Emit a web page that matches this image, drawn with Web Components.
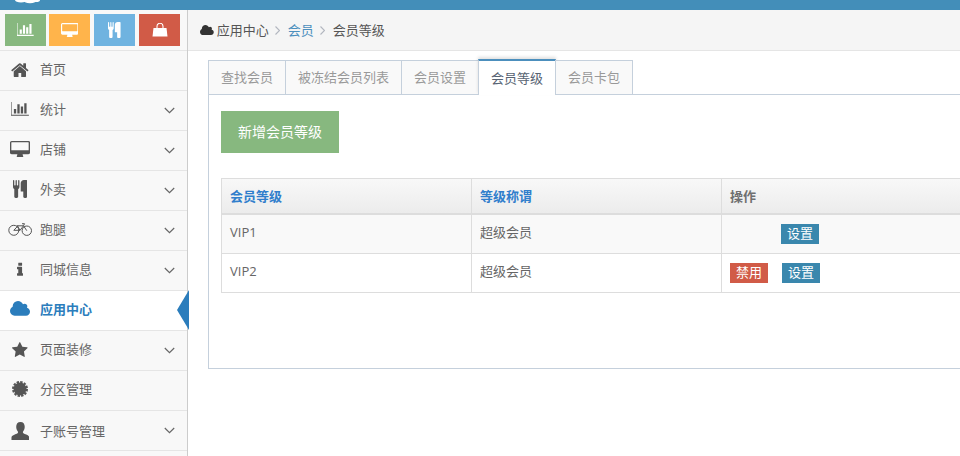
<!DOCTYPE html>
<html lang="zh">
<head>
<meta charset="utf-8">
<title>会员等级</title>
<style>
  html, body { margin: 0; height: 456px; overflow: hidden; background: #fff; }
  body { font: 13px/20px "Open Sans", "Noto Sans CJK SC", sans-serif; color: #666; }
</style>
</head>
<body>
<app-shell>
  <top-bar slot="top"></top-bar>
  <side-bar slot="side">
    <short-cuts></short-cuts>
    <menu-item icon="home" size="15">首页</menu-item>
    <menu-item icon="chart" size="15" arrow>统计</menu-item>
    <menu-item icon="desktop" size="16" arrow>店铺</menu-item>
    <menu-item icon="cutlery" size="18" arrow>外卖</menu-item>
    <menu-item icon="bicycle" size="13" arrow>跑腿</menu-item>
    <menu-item icon="info" size="14" arrow>同城信息</menu-item>
    <menu-item icon="cloud" size="16" active>应用中心</menu-item>
    <menu-item icon="star" size="15" arrow>页面装修</menu-item>
    <menu-item icon="cert" size="16">分区管理</menu-item>
    <menu-item icon="user" size="18" arrow low>子账号管理</menu-item>
  </side-bar>
  <bread-crumbs slot="crumbs">
    <span>应用中心</span>
    <a>会员</a>
    <span>会员等级</span>
  </bread-crumbs>
  <tab-box slot="main">
    <tab-item slot="tabs" w="78">查找会员</tab-item>
    <tab-item slot="tabs" w="117">被冻结会员列表</tab-item>
    <tab-item slot="tabs" w="78">会员设置</tab-item>
    <tab-item slot="tabs" w="78" active>会员等级</tab-item>
    <tab-item slot="tabs" w="78">会员卡包</tab-item>
    <add-button>新增会员等级</add-button>
    <level-table>
      <level-row head>
        <span>会员等级</span>
        <span>等级称谓</span>
        <span>操作</span>
      </level-row>
      <level-row odd>
        <span>VIP1</span>
        <span>超级会员</span>
        <span><mini-btn color="#3a87ad" style="margin-left:51px">设置</mini-btn></span>
      </level-row>
      <level-row last>
        <span>VIP2</span>
        <span>超级会员</span>
        <span><mini-btn color="#d15b47">禁用</mini-btn><mini-btn color="#3a87ad" style="margin-left:14px">设置</mini-btn></span>
      </level-row>
    </level-table>
  </tab-box>
</app-shell>

<script>
// icon paths, [viewBox width, viewBox height, d]
const ICONS = {
  home: [1664, 1408, 'M1408 864v480q0 26-19 45t-45 19h-384v-384h-256v384h-384q-26 0-45-19t-19-45v-480q0-1 .5-3t.5-3l575-474 575 474q1 2 1 6zm223-69l-62 74q-8 9-21 11h-3q-13 0-21-7l-692-577-692 577q-12 8-24 7-13-2-21-11l-62-74q-8-10-7-23.500t11-21.500l719-599q32-26 76-26t76 26l244 204v-195q0-14 9-23t23-9h192q14 0 23 9t9 23v408l219 182q10 8 11 21.500t-7 23.500z'],
  chart: [2048, 1664, 'M576 768v512h-256v-512h256zm384-512v1024h-256v-1024h256zm1024 1152v128h-2048v-1536h128v1408h1920zm-640-896v768h-256v-768h256zm384-384v1152h-256v-1152h256z'],
  desktop: [1920, 1536, 'M1792 864v-704q0-13-9.500-22.500t-22.500-9.500h-1600q-13 0-22.500 9.500t-9.500 22.500v704q0 13 9.500 22.500t22.500 9.500h1600q13 0 22.500-9.500t9.500-22.500zm128-704v960q0 66-47 113t-113 47h-544q0 37 16 77.500t32 71 16 43.500q0 26-19 45t-45 19h-512q-26 0-45-19t-19-45q0-14 16-44t32-70 16-78h-544q-66 0-113-47t-47-113v-960q0-66 47-113t113-47h1632q66 0 113 47t47 113z'],
  cutlery: [1408, 1792, 'M640 64v640q0 61-35.500 111t-92.500 70v779q0 52-38 90t-90 38h-128q-52 0-90-38t-38-90v-779q-57-20-92.500-70t-35.500-111v-640q0-26 19-45t45-19 45 19 19 45v416q0 26 19 45t45 19 45-19 19-45v-416q0-26 19-45t45-19 45 19 19 45v416q0 26 19 45t45 19 45-19 19-45v-416q0-26 19-45t45-19 45 19 19 45zm768 0v1600q0 52-38 90t-90 38h-128q-52 0-90-38t-38-90v-512h-224q-13 0-22.500-9.500t-9.500-22.500v-800q0-132 94-226t226-94h256q26 0 45 19t19 45z'],
  info: [640, 1408, 'M640 1184v128q0 26-19 45t-45 19h-512q-26 0-45-19t-19-45v-128q0-26 19-45t45-19h64v-384h-64q-26 0-45-19t-19-45v-128q0-26 19-45t45-19h384q26 0 45 19t19 45v576h64q26 0 45 19t19 45zm-128-1056v192q0 26-19 45t-45 19h-256q-26 0-45-19t-19-45v-192q0-26 19-45t45-19h256q26 0 45 19t19 45z'],
  cloud: [1920, 1536, 'M1920 1024q0 159-112.500 271.500t-271.500 112.500h-1088q-185 0-316.500-131.500t-131.500-316.500q0-132 71-241.500t187-163.500q-2-28-2-43 0-212 150-362t362-150q158 0 286.500 88t187.500 230q70-62 166-62 106 0 181 75t75 181q0 75-41 138 129 30 213 134.500t84 239.500z'],
  star: [1664, 1600, 'M1664 615q0 22-26 48l-363 354 86 500q1 7 1 20 0 21-10.500 35.500t-30.500 14.500q-19 0-40-12l-449-236-449 236q-22 12-40 12-21 0-31.500-14.500t-10.500-35.500q0-6 2-20l86-500-364-354q-25-27-25-48 0-37 56-46l502-73 225-455q19-41 49-41t49 41l225 455 502 73q56 9 56 46z'],
  user: [20, 19, 'M10 0c3 0 4.500 2.200 4.500 5 0 2-.8 3.800-1.700 5-.4.600-.3 1.500.3 2 1.800 1.200 6.400 2 6.400 4.500V19H.5v-2.500C.5 14 5.100 13.200 6.900 12c.6-.5.7-1.400.3-2-.9-1.200-1.700-3-1.700-5C5.500 2.200 7 0 10 0z']
};

function iconSvg(name, size) {
  if (name === 'bicycle') {
    return `<svg viewBox="0 0 24 13" height="${size}" width="${size * 24 / 13}" fill="none" stroke="currentColor" stroke-width="1">
      <circle cx="5.800" cy="7.300" r="5"/><circle cx="18.800" cy="7.700" r="4.700"/>
      <path d="M5.800 7.300L10 2.800H15.500L18.800 7.700M9 2L12 7.300H5.800M15.500 2.800L12 7.300M14 .7h2.500L15.500 2.800"/>
    </svg>`;
  }
  if (name === 'cert') {
    return `<svg viewBox="0 0 16 16" height="${size}" width="${size}" fill="currentColor" stroke="currentColor">
      <circle cx="8" cy="8" r="6.500" stroke="none"/>
      <circle cx="8" cy="8" r="7" fill="none" stroke-width="2" stroke-dasharray="2.400 1.265"/>
    </svg>`;
  }
  if (name === 'bag') {
    return `<svg viewBox="0 0 16 14" height="${size}" width="${size * 16 / 14}" fill="currentColor">
      <path d="M1.500 5h13l1 8.500H.5z"/>
      <path d="M5 6V3.300a3 3 0 0 1 6 0V6" fill="none" stroke="currentColor" stroke-width="1.100"/>
    </svg>`;
  }
  const [w, h, d] = ICONS[name];
  return `<svg viewBox="0 0 ${w} ${h}" height="${size}" width="${size * w / h}" fill="currentColor"><path d="${d}"/></svg>`;
}

const shellTemplate = document.createElement('template');
shellTemplate.innerHTML = `
<style>
  :host { display: grid; grid-template-columns: 188px 1fr; grid-template-rows: 10px 41px 1fr; height: 456px; }
  ::slotted([slot=top]) { grid-column: 1 / 3; }
  .side { grid-row: 2 / 4; display: block; }
</style>
<slot name="top"></slot>
<div class="side"><slot name="side"></slot></div>
<slot name="crumbs"></slot>
<slot name="main"></slot>`;

class AppShell extends HTMLElement {
  constructor() {
    super();
    this.attachShadow({ mode: 'open' });
    this.shadowRoot.appendChild(shellTemplate.content.cloneNode(true));
  }
}

class TopBar extends HTMLElement {
  constructor() {
    super();
    this.attachShadow({ mode: 'open' }).innerHTML = `
    <style>
      :host { display: block; height: 10px; background: #438eb9; overflow: hidden; }
      svg { display: block; margin-left: 15px; }
    </style>
    <svg width="25" height="4" viewBox="0 0 25 4" fill="#fff"><ellipse cx="6" cy="0" rx="6" ry="2.500"/><ellipse cx="15" cy="0" rx="7" ry="3.300"/><ellipse cx="21" cy="0" rx="4" ry="2"/></svg>`;
  }
}

class SideBar extends HTMLElement {
  constructor() {
    super();
    this.attachShadow({ mode: 'open' }).innerHTML = `
    <style>
      :host { display: block; height: 446px; background: #f8f8f8; border-right: 1px solid #ccc; box-sizing: border-box; width: 188px; position: relative; }
    </style>
    <slot></slot>`;
  }
}

class ShortCuts extends HTMLElement {
  constructor() {
    super();
    const items = [['chart', '#87b87f', 14], ['desktop', '#ffb44b', 14], ['cutlery', '#6fb3e0', 16], ['bag', '#d15b47', 14]];
    this.attachShadow({ mode: 'open' }).innerHTML = `
    <style>
      :host { display: flex; height: 41px; padding: 4px 0 0 5px; box-sizing: border-box; border-bottom: 1px solid #e5e5e5; }
      div { width: 41px; height: 32px; margin-right: 4px; display: flex; align-items: center; justify-content: center; color: #fff; }
      div:nth-child(2) { margin-right: 3px; }
    </style>
    ${items.map(([name, bg, size]) => `<div style="background:${bg}">${iconSvg(name, size)}</div>`).join('')}`;
  }
}

class MenuItem extends HTMLElement {
  constructor() {
    super();
    this.attachShadow({ mode: 'open' });
  }
  connectedCallback() {
    if (this.rendered) return;
    this.rendered = true;
    const active = this.hasAttribute('active');
    const arrow = this.hasAttribute('arrow');
    const low = this.hasAttribute('low');
    this.shadowRoot.innerHTML = `
    <style>
      :host { display: flex; align-items: center; height: 40px; box-sizing: border-box; padding-bottom: 3px; border-bottom: 1px solid #e5e5e5; position: relative; background: ${active ? '#fff' : '#f8f8f8'}; color: ${active ? '#2b7dbc' : '#666'}; font-weight: ${active ? 700 : 400}; }
      .ic { width: 40px; display: flex; justify-content: center; color: ${active ? '#2b7dbc' : '#555'}; ${low ? 'padding-top: 4px;' : ''} }
      .tx { flex: 1; ${low ? 'padding-top: 3px;' : ''} }
      .chev { margin: 2px 12px 0 0; width: 11px; height: 7px; color: #666; }
      .tip { position: absolute; right: -2px; top: -1px; width: 12px; height: 40px; background: #2b7dbc; clip-path: polygon(100% 0, 100% 100%, 0 50%); }
    </style>
    <span class="ic">${iconSvg(this.getAttribute('icon'), +this.getAttribute('size'))}</span>
    <span class="tx"><slot></slot></span>
    ${arrow ? '<svg class="chev" viewBox="0 0 11 7" fill="none" stroke="currentColor" stroke-width="1.200"><path d="M.8 1l4.700 4.700L10.200 1"/></svg>' : ''}
    ${active ? '<i class="tip"></i>' : ''}`;
  }
}

class BreadCrumbs extends HTMLElement {
  constructor() {
    super();
    this.attachShadow({ mode: 'open' }).innerHTML = `
    <style>
      :host { display: flex; align-items: center; height: 41px; box-sizing: border-box; background: #f5f5f5; border-bottom: 1px solid #e5e5e5; padding-left: 12px; color: #555; }
      svg.cloud { margin-right: 3px; color: #333; }
      ::slotted(a) { color: #4c8fbd; }
      ::slotted(*:not(:first-child)) { margin-left: 19px; }
      ::slotted(*) { display: block; }
      .sep { position: absolute; top: 26px; width: 5px; height: 9px; color: #b2b6bf; }
    </style>
    ${iconSvg('cloud', 11).replace('<svg', '<svg class="cloud"')}
    <slot></slot>
    <svg class="sep" style="left:275px" viewBox="0 0 5 9" fill="none" stroke="currentColor" stroke-width="1.100"><path d="M.5 .5l4 4-4 4"/></svg>
    <svg class="sep" style="left:320px" viewBox="0 0 5 9" fill="none" stroke="currentColor" stroke-width="1.100"><path d="M.5 .5l4 4-4 4"/></svg>`;
  }
}

class TabBox extends HTMLElement {
  constructor() {
    super();
    this.attachShadow({ mode: 'open' }).innerHTML = `
    <style>
      :host { display: block; padding: 9px 0 0 20px; width: 800px; box-sizing: border-box; }
      .tabs { display: flex; height: 34px; position: relative; z-index: 1; }
      .panel { border: 1px solid #c5d0dc; height: 275px; box-sizing: border-box; padding: 16px 12px; }
    </style>
    <div class="tabs"><slot name="tabs"></slot></div>
    <div class="panel"><slot></slot></div>`;
  }
}

class TabItem extends HTMLElement {
  constructor() {
    super();
    this.attachShadow({ mode: 'open' });
  }
  connectedCallback() {
    const active = this.hasAttribute('active');
    this.shadowRoot.innerHTML = `
    <style>
      :host { display: block; box-sizing: border-box; width: ${this.getAttribute('w')}px; text-align: center;
        height: ${active ? 36 : 35}px; margin-top: ${active ? -1 : 0}px; margin-left: -1px; flex: none;
        border: 1px solid #c5d0dc; ${active ? 'border-top: 2px solid #4c8fbd; border-bottom: 0; background: #fff; color: #576373; line-height: 34px; box-shadow: 0 -2px 3px rgba(0,0,0,.12);' : 'background: #f9f9f9; color: #999; line-height: 33px;'} }
      :host(:first-child) { margin-left: 0; }
    </style>
    <slot></slot>`;
  }
}

class AddButton extends HTMLElement {
  constructor() {
    super();
    this.attachShadow({ mode: 'open' }).innerHTML = `
    <style>
      :host { display: block; width: 118px; height: 42px; line-height: 42px; font-size: 14px; text-align: center; background: #87b87f; color: #fff; }
    </style>
    <slot></slot>`;
  }
}

class LevelTable extends HTMLElement {
  constructor() {
    super();
    this.attachShadow({ mode: 'open' }).innerHTML = `
    <style>
      :host { display: block; margin-top: 25px; border: 1px solid #ddd; border-bottom: 0; }
    </style>
    <slot></slot>`;
  }
}

class LevelRow extends HTMLElement {
  constructor() {
    super();
    this.attachShadow({ mode: 'open' });
  }
  connectedCallback() {
    const head = this.hasAttribute('head');
    const odd = this.hasAttribute('odd');
    this.shadowRoot.innerHTML = `
    <style>
      :host { display: grid; grid-template-columns: 249px 250px 1fr; box-sizing: border-box;
        height: ${head ? 36 : 39}px; border-bottom: ${head ? 2 : 1}px solid #ddd;
        background: ${head ? 'linear-gradient(#f8f8f8, #ececec)' : odd ? '#f9f9f9' : '#fff'};
        font-weight: ${head ? 700 : 400}; color: ${head ? '#707070' : '#666'}; }
      ::slotted(span) { display: flex; align-items: center; padding-left: 8px; border-left: 1px solid #ddd; ${head ? '' : 'padding-bottom: 5px;'} }
      ::slotted(span:first-child) { border-left: 0; ${head ? 'color: #307ecc;' : ''} }
      ::slotted(span:nth-child(2)) { ${head ? 'color: #307ecc;' : ''} }
    </style>
    <slot></slot>`;
  }
}

class MiniBtn extends HTMLElement {
  constructor() {
    super();
    this.attachShadow({ mode: 'open' });
  }
  connectedCallback() {
    this.shadowRoot.innerHTML = `
    <style>
      :host { display: inline-block; width: 38px; height: 20px; line-height: 19px; text-align: center; color: #fff; background: ${this.getAttribute('color')}; position: relative; top: 2px; }
    </style>
    <slot></slot>`;
  }
}

customElements.define('app-shell', AppShell);
customElements.define('top-bar', TopBar);
customElements.define('side-bar', SideBar);
customElements.define('short-cuts', ShortCuts);
customElements.define('menu-item', MenuItem);
customElements.define('bread-crumbs', BreadCrumbs);
customElements.define('tab-box', TabBox);
customElements.define('tab-item', TabItem);
customElements.define('add-button', AddButton);
customElements.define('level-table', LevelTable);
customElements.define('level-row', LevelRow);
customElements.define('mini-btn', MiniBtn);
</script>
</body>
</html>
